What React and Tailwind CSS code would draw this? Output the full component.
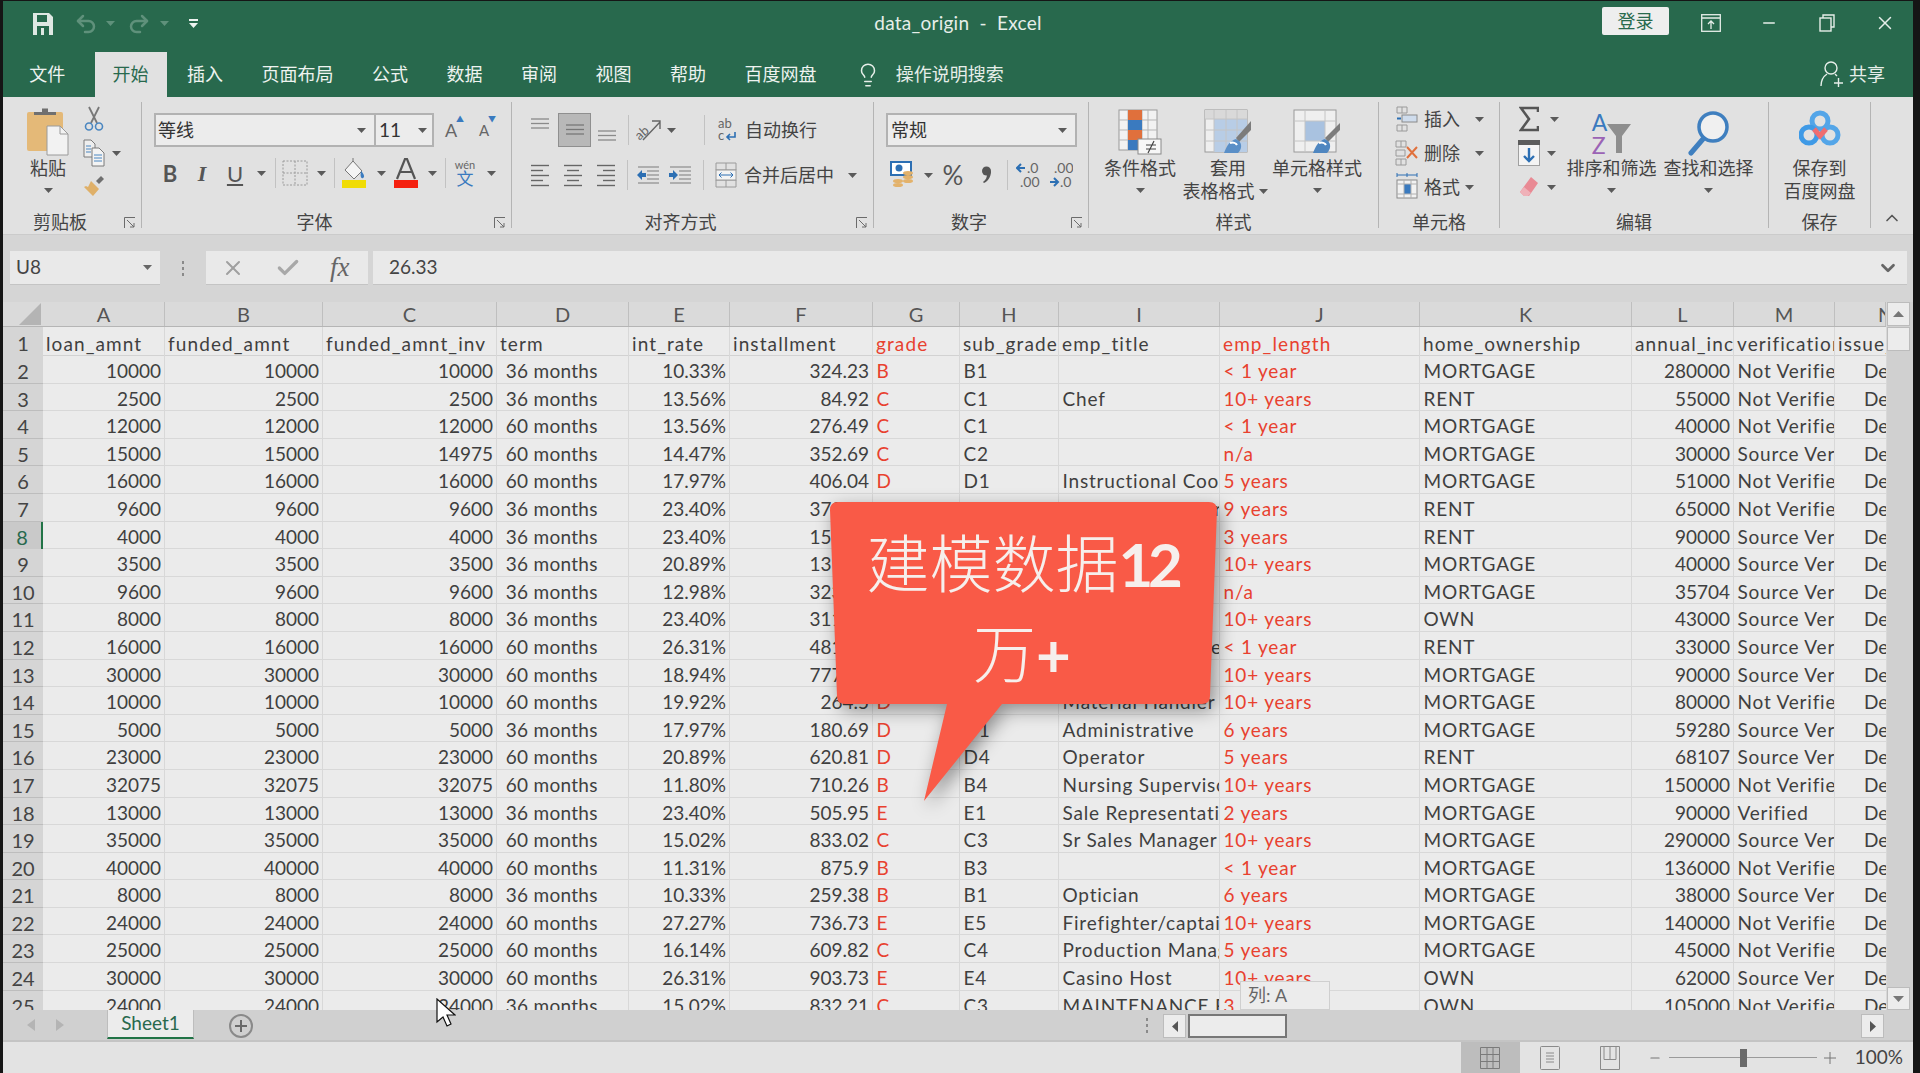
import React from "react";
import { X, Minus, Check, ChevronUp, ChevronDown, Undo2, Redo2, Lightbulb } from "lucide-react";

const COLS =
	"grid grid-cols-[40px_122px_158px_174px_132px_101px_143px_87px_99px_161px_200px_212px_102px_101px_51px]";

const HEAD = ["A", "B", "C", "D", "E", "F", "G", "H", "I", "J", "K", "L", "M", "N"];
const FIRST = ["loan_amnt", "funded_amnt", "funded_amnt_inv", "term", "int_rate", "installment", "grade", "sub_grade", "emp_title", "emp_length", "home_ownership", "annual_inc", "verification", "issue_d"];

const NV = "Not Verified";
const SV = "Source Verified";
const ROWS = [
	[10000, 10000, 10000, "36 months", "10.33%", "324.23", "B", "B1", "", "< 1 year", "MORTGAGE", 280000, NV],
	[2500, 2500, 2500, "36 months", "13.56%", "84.92", "C", "C1", "Chef", "10+ years", "RENT", 55000, NV],
	[12000, 12000, 12000, "60 months", "13.56%", "276.49", "C", "C1", "", "< 1 year", "MORTGAGE", 40000, NV],
	[15000, 15000, 14975, "60 months", "14.47%", "352.69", "C", "C2", "", "n/a", "MORTGAGE", 30000, SV],
	[16000, 16000, 16000, "60 months", "17.97%", "406.04", "D", "D1", "Instructional Coordinator", "5 years", "MORTGAGE", 51000, NV],
	[9600, 9600, 9600, "36 months", "23.40%", "373.94", "E", "E1", "Account Manager Senior Leader", "9 years", "RENT", 65000, NV],
	[4000, 4000, 4000, "36 months", "23.40%", "155.68", "E", "E1", "", "3 years", "RENT", 90000, SV],
	[3500, 3500, 3500, "36 months", "20.89%", "131.67", "D", "D4", "", "10+ years", "MORTGAGE", 40000, SV],
	[9600, 9600, 9600, "36 months", "12.98%", "323.37", "B", "B5", "", "n/a", "MORTGAGE", 35704, SV],
	[8000, 8000, 8000, "36 months", "23.40%", "311.35", "E", "E1", "", "10+ years", "OWN", 43000, SV],
	[16000, 16000, 16000, "60 months", "26.31%", "481.77", "E", "E4", "Customer Service Manager", "< 1 year", "RENT", 33000, SV],
	[30000, 30000, 30000, "60 months", "18.94%", "777.23", "D", "D2", "", "10+ years", "MORTGAGE", 90000, SV],
	[10000, 10000, 10000, "60 months", "19.92%", "264.5", "D", "D3", "Material Handler", "10+ years", "MORTGAGE", 80000, NV],
	[5000, 5000, 5000, "36 months", "17.97%", "180.69", "D", "D1", "Administrative", "6 years", "MORTGAGE", 59280, SV],
	[23000, 23000, 23000, "60 months", "20.89%", "620.81", "D", "D4", "Operator", "5 years", "RENT", 68107, SV],
	[32075, 32075, 32075, "60 months", "11.80%", "710.26", "B", "B4", "Nursing Supervisor", "10+ years", "MORTGAGE", 150000, NV],
	[13000, 13000, 13000, "36 months", "23.40%", "505.95", "E", "E1", "Sale Representative", "2 years", "MORTGAGE", 90000, "Verified"],
	[35000, 35000, 35000, "60 months", "15.02%", "833.02", "C", "C3", "Sr Sales Manager", "10+ years", "MORTGAGE", 290000, SV],
	[40000, 40000, 40000, "60 months", "11.31%", "875.9", "B", "B3", "", "< 1 year", "MORTGAGE", 136000, NV],
	[8000, 8000, 8000, "36 months", "10.33%", "259.38", "B", "B1", "Optician", "6 years", "MORTGAGE", 38000, SV],
	[24000, 24000, 24000, "60 months", "27.27%", "736.73", "E", "E5", "Firefighter/captain", "10+ years", "MORTGAGE", 140000, NV],
	[25000, 25000, 25000, "60 months", "16.14%", "609.82", "C", "C4", "Production Manager", "5 years", "MORTGAGE", 45000, NV],
	[30000, 30000, 30000, "60 months", "26.31%", "903.73", "E", "E4", "Casino Host", "10+ years", "OWN", 62000, SV],
	[24000, 24000, 24000, "36 months", "15.02%", "832.21", "C", "C3", "MAINTENANCE FOREMAN", "3 years", "OWN", 105000, NV],
];
const RIGHT = [0, 1, 2, 4, 5, 11];
const RED = [6, 9];
const WIDE = [6, 7, 8, 9, 10, 12];

const Caret = ({ c = "#5a5a5a" }) => (
	<svg width="9" height="5" viewBox="0 0 9 5">
		<path d="M0 0h9L4.5 5z" fill={c} />
	</svg>
);

const S = ({ w, children }) => <div className={"flex items-center justify-center shrink-0 " + w}>{children}</div>;
const Sep = ({ w, h = "h-[30px]" }) => (
	<div className={"flex items-center justify-center shrink-0 " + w}>
		<div className={"w-px bg-[#c2c2c2] " + h} />
	</div>
);

const Launcher = () => (
	<svg width="12" height="12" viewBox="0 0 12 12" fill="none" stroke="#6b6b6b">
		<path d="M.5 11V.5H11M3 3l7 7M10 6v4H6" />
	</svg>
);

const Group = ({ w, label, launcher, children }) => (
	<div className={"relative flex flex-col h-[126px] shrink-0 border-r border-[#b4b4b4] " + w}>
		<div className="flex-1 min-h-0">{children}</div>
		<div
			className={
				"h-[20px] leading-[28px] text-center text-[18px] text-[#444] whitespace-nowrap " +
				(launcher ? "pr-[24px]" : "")
			}
		>
			{label}
		</div>
		{launcher && (
			<div className="absolute right-[5px] bottom-[-1px]">
				<Launcher />
			</div>
		)}
	</div>
);

const Lines = ({ ws, x = "left" }) => (
	<svg width="22" height="24" viewBox="0 0 22 24" stroke="#666" strokeWidth="1.4">
		{ws.map((w, i) => {
			const x1 = x === "left" ? 2 : x === "right" ? 20 - w : 11 - w / 2;
			return <line key={i} x1={x1} x2={x1 + w} y1={2.5 + i * 5} y2={2.5 + i * 5} />;
		})}
	</svg>
);

const Vert = ({ y, c = "#8a8a8a" }) => (
	<svg width="22" height="34" viewBox="0 0 22 34" stroke={c} strokeWidth="1.3">
		{[0, 1, 2].map((i) => (
			<line key={i} x1="2" x2="20" y1={y + i * 4.5} y2={y + i * 4.5} />
		))}
	</svg>
);

const Indent = ({ flip }) => (
	<svg width="24" height="20" viewBox="0 0 24 20">
		<g stroke="#8c8c8c" strokeWidth="1.2">
			{[2, 6, 10, 14, 18].map((y) => (
				<line key={y} x1={y > 4 && y < 16 ? 11 : 2} x2="23" y1={y} y2={y} />
			))}
		</g>
		<path d={flip ? "M10 10L5 5v3H1v4h4v3z" : "M1 10l5-5v3h4v4H6v3z"} fill="#2c6fb3" />
	</svg>
);

const Paste = () => (
	<svg width="44" height="50" viewBox="0 0 44 50">
		<rect x="1" y="5" width="36" height="39" rx="2" fill="#e4b978" />
		<path d="M8 8V5h8V1.5h6V5h8v3z" fill="#6f6f6f" />
		<path d="M21 19h13l8 8v21H21z" fill="#f2f2f2" stroke="#9a9a9a" />
		<path d="M34 19v8h8" fill="none" stroke="#9a9a9a" />
	</svg>
);

const Scissors = () => (
	<svg width="20" height="26" viewBox="0 0 20 26" fill="none">
		<path d="M5 1l8 16M15 1L7 17" stroke="#777" strokeWidth="1.8" />
		<circle cx="5" cy="20.5" r="3.5" stroke="#4a86c0" strokeWidth="1.6" />
		<circle cx="15" cy="20.5" r="3.5" stroke="#4a86c0" strokeWidth="1.6" />
	</svg>
);

const CopyIcon = () => (
	<svg width="22" height="28" viewBox="0 0 22 28" fill="none">
		<path d="M1 1h7l4 4v13H1z" fill="#eee" stroke="#7a7a7a" />
		<path d="M9 9h7l5 5v13H9z" fill="#f3f3f3" stroke="#7a7a7a" />
		<path d="M11 16h8M11 19h8M11 22h8M3 7h5M3 10h5M3 13h5" stroke="#4a86c0" />
	</svg>
);

const Brush = () => (
	<svg width="22" height="22" viewBox="0 0 22 22">
		<path d="M13 6l5-5 3 3-5 5z" fill="#6f6f6f" />
		<path d="M8 6l8 8-6 7-9-9 2-1 2 1z" fill="#dfb069" />
	</svg>
);

const Borders = () => (
	<svg width="26" height="26" viewBox="0 0 26 26" fill="none" stroke="#9a9a9a" strokeDasharray="2 1.5">
		<rect x="1" y="1" width="24" height="24" />
		<path d="M13 1v24M1 13h24" />
	</svg>
);

const Bucket = () => (
	<svg width="26" height="30" viewBox="0 0 26 30">
		<path d="M11 3l9 10-8 8-9-9z" fill="#f4f4f4" stroke="#777" />
		<path d="M11 3V0" stroke="#777" />
		<path d="M19 13c3 3 4 6 2 7s-3-2-2-7z" fill="#3b7cc0" />
		<rect x="0" y="22" width="24" height="8" fill="#f0dc05" />
	</svg>
);

const FontColor = () => (
	<svg width="24" height="30" viewBox="0 0 24 30">
		<path d="M3 21L11 1h2l8 20M6 14h12" fill="none" stroke="#555" strokeWidth="2.2" />
		<rect x="0" y="22" width="24" height="8" fill="#f5200f" />
	</svg>
);

const WrapIcon = () => (
	<svg width="20" height="26" viewBox="0 0 20 26">
		<text x="1" y="11" fontSize="13" fill="#666" fontFamily="Lato">ab</text>
		<text x="1" y="23" fontSize="13" fill="#666" fontFamily="Lato">c</text>
		<path d="M18 15v5H11M13 17l-3 3 3 3" fill="none" stroke="#2c6fb3" strokeWidth="1.6" />
	</svg>
);

const Orient = () => (
	<svg width="26" height="24" viewBox="0 0 26 24" fill="none">
		<text x="1" y="20" fontSize="13" fill="#666" fontFamily="Lato" transform="rotate(-42 6 18)">ab</text>
		<path d="M7 22L24 4M16 3h8v8" stroke="#666" strokeWidth="1.4" />
	</svg>
);

const Merge = () => (
	<svg width="22" height="26" viewBox="0 0 22 26" fill="none">
		<path d="M1 1h20v7H1zM1 18h20v7H1zM11 1v7M11 18v7" stroke="#9a9a9a" />
		<rect x="1" y="8" width="20" height="10" fill="#f3f3f3" stroke="#9a9a9a" />
		<path d="M4 13h14M6.5 10.5L4 13l2.5 2.5M15.5 10.5L18 13l-2.5 2.5" stroke="#2c6fb3" />
	</svg>
);

const Currency = () => (
	<svg width="24" height="28" viewBox="0 0 24 28">
		<rect x="1" y="1" width="20" height="13" fill="#fff" stroke="#2c6fb3" strokeWidth="2" />
		<circle cx="9" cy="7" r="3.5" fill="#2c6fb3" />
		<g fill="#e3b26b">
			<ellipse cx="18" cy="12" rx="5" ry="2" />
			<ellipse cx="18" cy="16" rx="5" ry="2" />
			<ellipse cx="18" cy="20" rx="5" ry="2" />
			<ellipse cx="8" cy="20" rx="5" ry="2" />
			<ellipse cx="8" cy="24" rx="5" ry="2" />
		</g>
	</svg>
);

const Comma = () => (
	<svg width="10" height="18" viewBox="0 0 10 18">
		<circle cx="5.500" cy="5" r="4.500" fill="#555" />
		<path d="M10 5c0 6-3 10-7 12l-1-1c3-2 4-5 4-8z" fill="#555" />
	</svg>
);

const Dec = ({ more }) =>
	more ? (
		<svg width="24" height="28" viewBox="0 0 24 28" fontFamily="Lato" fontSize="14" fill="#666">
			<path d="M1 7h8M5 3L1 7l4 4" fill="none" stroke="#2c6fb3" strokeWidth="2" />
			<text x="11" y="12">.0</text>
			<text x="4" y="26">.00</text>
		</svg>
	) : (
		<svg width="24" height="28" viewBox="0 0 24 28" fontFamily="Lato" fontSize="14" fill="#666">
			<text x="5" y="12">.00</text>
			<path d="M1 21h8M5 17l4 4-4 4" fill="none" stroke="#2c6fb3" strokeWidth="2" />
			<text x="11" y="26">.0</text>
		</svg>
	);

const CondFormat = () => (
	<svg width="44" height="46" viewBox="0 0 44 46">
		<rect x="1" y="1" width="38" height="40" fill="#f2f2f2" stroke="#9a9a9a" />
		<path d="M10 1v40M24 1v40M30 1v40M1 11h38M1 21h38M1 31h38" stroke="#b5b5b5" />
		<rect x="10" y="1" width="14" height="10" fill="#e0703c" />
		<rect x="10" y="11" width="14" height="10" fill="#3a7abf" />
		<rect x="10" y="21" width="14" height="10" fill="#e0703c" />
		<rect x="10" y="31" width="14" height="10" fill="#3a7abf" />
		<rect x="20" y="30" width="23" height="15" fill="#f7f7f7" stroke="#8a8a8a" />
		<path d="M28 36h10M28 40h10M36 32l-6 12" stroke="#444" strokeWidth="1.2" fill="none" />
	</svg>
);

const TableStyle = () => (
	<svg width="48" height="46" viewBox="0 0 48 46">
		<rect x="1" y="1" width="42" height="42" fill="#efefef" stroke="#9a9a9a" />
		<rect x="1" y="1" width="42" height="9" fill="#d9d9d9" />
		<rect x="10" y="10" width="33" height="33" fill="#b8cde6" />
		<path d="M10 1v42M22 1v42M33 1v42M1 10h42M1 21h42M1 32h42" stroke="#c4c4c4" />
		<path d="M47 12l-15 17 3 4 12-12z" fill="#7c7c7c" />
		<path d="M32 30c-6 2-9 6-12 14h14c4-4 4-9 1-12z" fill="#5a8fc7" />
		<path d="M26 34c3-1 6 0 7 2" stroke="#fff" strokeWidth="2" fill="none" />
	</svg>
);

const CellStyle = () => (
	<svg width="48" height="46" viewBox="0 0 48 46">
		<rect x="1" y="1" width="42" height="42" fill="#efefef" stroke="#9a9a9a" />
		<rect x="12" y="12" width="20" height="20" fill="#a9c2e0" />
		<path d="M12 1v42M32 1v42M1 12h42M1 32h42" stroke="#c4c4c4" />
		<path d="M47 14l-15 15 3 4 12-12z" fill="#7c7c7c" />
		<path d="M32 30c-6 2-9 6-12 14h14c4-4 4-9 1-12z" fill="#4f86c0" />
		<path d="M26 34c3-1 6 0 7 2" stroke="#fff" strokeWidth="2" fill="none" />
	</svg>
);

const CellInsert = () => (
	<svg width="22" height="26" viewBox="0 0 22 26" fill="none" stroke="#9a9a9a">
		<path d="M1 1h10v6H1zM6 1v6M1 19h10v6H1zM6 19v6" />
		<rect x="6" y="9" width="15" height="7" fill="#cfdcec" stroke="#8a8a8a" />
		<path d="M1 12.5h4" stroke="#2c6fb3" strokeWidth="2" />
	</svg>
);

const CellDelete = () => (
	<svg width="24" height="26" viewBox="0 0 24 26" fill="none" stroke="#9a9a9a">
		<path d="M1 1h10v6H1zM6 1v6M1 19h10v6H1zM6 19v6M1 10h9v6H1z" />
		<path d="M12 7l10 11M22 7L12 18" stroke="#e0703c" strokeWidth="2" />
	</svg>
);

const CellFormat = () => (
	<svg width="24" height="28" viewBox="0 0 24 28" fill="none" stroke="#8a8a8a">
		<path d="M2 2h20M2 0v4M22 0v4M12 0v4" stroke="#2c6fb3" />
		<rect x="2" y="7" width="20" height="18" fill="#f2f2f2" />
		<rect x="9" y="11" width="7" height="10" fill="#3a7abf" stroke="none" />
		<path d="M2 11h20M2 21h20M9 7v18M16 7v18" stroke="#b0b0b0" />
	</svg>
);

const Sigma = () => (
	<svg width="20" height="26" viewBox="0 0 20 26" fill="none">
		<path d="M19 6V2H2l8 11-8 11h17v-4" stroke="#555" strokeWidth="2.6" />
	</svg>
);

const FillDown = () => (
	<svg width="22" height="26" viewBox="0 0 22 26">
		<rect x=".5" y=".5" width="21" height="25" fill="#f4f4f4" stroke="#a0a0a0" />
		<rect x="0" y="0" width="22" height="5" fill="#5c5c5c" />
		<path d="M11 8v13M6 16l5 5 5-5" fill="none" stroke="#2c6fb3" strokeWidth="2.4" />
	</svg>
);

const Eraser = () => (
	<svg width="20" height="22" viewBox="0 0 20 22">
		<path d="M12 1l7 6-9 13H5l-4-4z" fill="#e98a94" />
		<path d="M1 16l4-5 7 6-3 3H5z" fill="#efb1b8" />
	</svg>
);

const SortIcon = () => (
	<div className="flex items-start h-[46px] mt-[2px]">
		<div className="flex flex-col leading-[23px] text-[23px] font-['Lato',sans-serif]">
			<span className="text-[#3a7abf]">A</span>
			<span className="text-[#9b63b5]">Z</span>
		</div>
		<svg width="24" height="32" viewBox="0 0 24 32" className="mt-[12px]">
			<path d="M0 1h24L15 13v17H9V13z" fill="#8e8e8e" />
		</svg>
	</div>
);

const Magnifier = () => (
	<svg width="42" height="50" viewBox="0 0 42 50" fill="none">
		<circle cx="25" cy="18" r="14" fill="#f0f0f0" stroke="#3f7fbf" strokeWidth="3.5" />
		<path d="M15 30L3 44" stroke="#3f7fbf" strokeWidth="5" strokeLinecap="round" />
	</svg>
);

const BaiduCloud = () => (
	<svg width="42" height="40" viewBox="0 0 42 40" fill="none" strokeWidth="5">
		<circle cx="21" cy="12" r="8" stroke="#53a5e8" />
		<circle cx="10" cy="26" r="8" stroke="#3f9ae6" />
		<circle cx="31" cy="26" r="8" stroke="#53a5e8" />
		<path d="M15 20l6 7 6-7" stroke="#ef6d70" />
	</svg>
);

const SaveIcon = () => (
	<svg width="20" height="22" viewBox="0 0 20 22">
		<path d="M0 0h16l4 4v18H0z" fill="#dfe8e3" />
		<rect x="4" y="2" width="10" height="7" fill="#28694d" />
		<rect x="4" y="13" width="12" height="9" fill="#28694d" />
		<rect x="8" y="15" width="3" height="7" fill="#dfe8e3" />
	</svg>
);

const BigBtn = ({ w, icon, lines, caret }) => (
	<div className={"flex flex-col items-center shrink-0 " + w}>
		<div className="h-[48px] mt-[7px] flex items-start justify-center">{icon}</div>
		{lines.map((l, i) => (
			<div key={i} className="h-[23px] leading-[23px] text-[18px] text-[#444] whitespace-nowrap">
				{l}
			</div>
		))}
		{caret && (
			<div className="h-[21px] flex items-center">
				<Caret />
			</div>
		)}
	</div>
);

const SmallBtn = ({ icon, text, caretW }) => (
	<div className="flex items-center h-[34px] ml-[11px]">
		<S w="w-[34px]">{icon}</S>
		<span className="text-[18px] text-[#444] w-[36px] whitespace-nowrap">{text}</span>
		<S w={caretW}>
			<Caret />
		</S>
	</div>
);

const Tab = ({ children, active, cls = "" }) => (
	<div
		className={
			"h-[45px] px-[18px] mx-[1.25px] leading-[44px] text-[18px] whitespace-nowrap " +
			(active ? "bg-[#e1e1e1] text-[#28694d] " : "text-[#eef3f0] ") +
			cls
		}
	>
		{children}
	</div>
);

const Ribbon = () => (
	<div className="flex items-start h-[138px] pt-[5px] bg-[#e1e1e1] border-b border-[#cbcbcb]">
		<Group w="w-[139px]" label="剪贴板" launcher>
			<div className="flex">
				<div className="flex flex-col items-center w-[44px] ml-[23px]">
					<div className="mt-[5px] h-[50px]">
						<Paste />
					</div>
					<div className="h-[23px] leading-[23px] text-[18px] text-[#444]">粘贴</div>
					<div className="h-[21px] flex items-center">
						<Caret />
					</div>
				</div>
				<div className="flex flex-col ml-[12px]">
					<S w="w-[24px] h-[34px]">
						<Scissors />
					</S>
					<div className="flex items-center h-[34px]">
						<S w="w-[24px]">
							<CopyIcon />
						</S>
						<S w="w-[20px]">
							<Caret />
						</S>
					</div>
					<S w="w-[24px] h-[32px]">
						<Brush />
					</S>
				</div>
			</div>
		</Group>

		<Group w="w-[370px]" label="字体" launcher>
			<div className="flex items-center mt-[11px] h-[34px] ml-[12px]">
				<div className="flex items-center justify-between w-[222px] h-[34px] pl-[2px] pr-[8px] bg-[#ececec] border-2 border-[#b2b2b2] text-[18px] text-[#333]">
					等线
					<Caret />
				</div>
				<div className="flex items-center justify-between w-[58px] h-[34px] pl-[3px] pr-[5px] bg-[#ececec] border-2 border-l-0 border-[#b2b2b2] text-[19px] text-[#333]">
					11
					<Caret />
				</div>
				<S w="w-[34px]">
					<span className="relative text-[18px] text-[#666]">
						A<span className="absolute left-[11px] top-[-4px] text-[8px] text-[#3a7abf]">▲</span>
					</span>
				</S>
				<S w="w-[32px]">
					<span className="relative text-[15px] text-[#666]">
						A<span className="absolute left-[9px] top-[-6px] text-[8px] text-[#3a7abf]">▼</span>
					</span>
				</S>
			</div>
			<div className="flex items-center mt-[11px] h-[30px] ml-[12px]">
				<S w="w-[32px]">
					<span className="font-bold text-[22px] text-[#555]">B</span>
				</S>
				<S w="w-[32px]">
					<span className="italic font-bold text-[22px] text-[#555] font-['Liberation_Serif',serif]">I</span>
				</S>
				<S w="w-[34px]">
					<span className="underline text-[22px] text-[#555]">U</span>
				</S>
				<S w="w-[18px]">
					<Caret />
				</S>
				<Sep w="w-[10px]" />
				<S w="w-[30px]">
					<Borders />
				</S>
				<S w="w-[22px]">
					<Caret />
				</S>
				<Sep w="w-[4px]" />
				<S w="w-[38px]">
					<Bucket />
				</S>
				<S w="w-[14px]">
					<Caret />
				</S>
				<S w="w-[36px]">
					<FontColor />
				</S>
				<S w="w-[16px]">
					<Caret />
				</S>
				<Sep w="w-[10px]" />
				<S w="w-[30px]">
					<div className="flex flex-col items-center leading-none">
						<span className="text-[11px] text-[#666]">wén</span>
						<span className="text-[17px] text-[#3a7abf]">文</span>
					</div>
				</S>
				<S w="w-[22px]">
					<Caret />
				</S>
			</div>
		</Group>

		<Group w="w-[362px]" label="对齐方式" launcher>
			<div className="flex items-center mt-[11px] h-[34px] ml-[10px]">
				<S w="w-[36px]">
					<Vert y={6} />
				</S>
				<div className="flex items-center justify-center w-[33px] h-[34px] shrink-0 bg-[#b8b8b8] border border-[#8f8f8f]">
					<Vert y={12} c="#777" />
				</div>
				<S w="w-[32px]">
					<Vert y={18} />
				</S>
				<Sep w="w-[10px]" />
				<S w="w-[32px]">
					<Orient />
				</S>
				<S w="w-[12px]">
					<Caret />
				</S>
				<div className="w-[22px] shrink-0" />
				<Sep w="w-[10px]" />
				<S w="w-[36px]">
					<WrapIcon />
				</S>
				<span className="text-[18px] text-[#444] whitespace-nowrap">自动换行</span>
			</div>
			<div className="flex items-center mt-[13px] h-[30px] ml-[10px]">
				<S w="w-[36px]">
					<Lines ws={[18, 12, 18, 12, 18]} />
				</S>
				<S w="w-[30px]">
					<Lines ws={[18, 12, 18, 12, 18]} x="center" />
				</S>
				<S w="w-[36px]">
					<Lines ws={[18, 12, 18, 12, 18]} x="right" />
				</S>
				<Sep w="w-[6px]" />
				<S w="w-[36px]">
					<Indent />
				</S>
				<S w="w-[28px]">
					<Indent flip />
				</S>
				<Sep w="w-[18px]" />
				<S w="w-[28px]">
					<Merge />
				</S>
				<span className="ml-[4px] w-[90px] text-[18px] text-[#444] whitespace-nowrap">合并后居中</span>
				<S w="w-[36px]">
					<Caret />
				</S>
			</div>
		</Group>

		<Group w="w-[215px]" label="数字" launcher>
			<div className="flex items-center justify-between mt-[11px] ml-[12px] w-[191px] h-[34px] pl-[3px] pr-[8px] bg-[#ececec] border-2 border-[#b2b2b2] text-[18px] text-[#333]">
				常规
				<Caret />
			</div>
			<div className="flex items-center mt-[13px] h-[30px] ml-[12px]">
				<S w="w-[32px]">
					<Currency />
				</S>
				<S w="w-[20px]">
					<Caret />
				</S>
				<S w="w-[30px]">
					<span className="text-[26px] text-[#555]">%</span>
				</S>
				<S w="w-[36px]">
					<Comma />
				</S>
				<Sep w="w-[6px]" />
				<S w="w-[36px]">
					<Dec more />
				</S>
				<S w="w-[30px]">
					<Dec />
				</S>
			</div>
		</Group>

		<Group w="w-[290px]" label="样式">
			<div className="flex ml-[11px]">
				<BigBtn w="w-[80px]" icon={<CondFormat />} lines={["条件格式"]} caret />
				<div className="flex flex-col items-center w-[88px] ml-[4px] shrink-0">
					<div className="h-[48px] mt-[7px]">
						<TableStyle />
					</div>
					<div className="h-[23px] leading-[23px] text-[18px] text-[#444]">套用</div>
					<div className="flex items-center gap-[4px] h-[23px] mr-[6px] text-[18px] text-[#444] whitespace-nowrap">
						表格格式
						<Caret />
					</div>
				</div>
				<BigBtn w="w-[90px]" icon={<CellStyle />} lines={["单元格样式"]} caret />
			</div>
		</Group>

		<Group w="w-[121px]" label="单元格">
			<SmallBtn icon={<CellInsert />} text="插入" caretW="w-[38px]" />
			<SmallBtn icon={<CellDelete />} text="删除" caretW="w-[38px]" />
			<SmallBtn icon={<CellFormat />} text="格式" caretW="w-[18px]" />
		</Group>

		<Group w="w-[269px]" label="编辑">
			<div className="flex">
				<div className="flex flex-col w-[65px] shrink-0 pl-[12px]">
					<div className="flex items-center h-[34px]">
						<S w="w-[34px]">
							<Sigma />
						</S>
						<S w="w-[16px]">
							<Caret />
						</S>
					</div>
					<div className="flex items-center h-[34px]">
						<S w="w-[34px]">
							<FillDown />
						</S>
						<S w="w-[10px]">
							<Caret />
						</S>
					</div>
					<div className="flex items-center h-[34px]">
						<S w="w-[34px]">
							<Eraser />
						</S>
						<S w="w-[10px]">
							<Caret />
						</S>
					</div>
				</div>
				<BigBtn w="w-[93px]" icon={<SortIcon />} lines={["排序和筛选"]} caret />
				<BigBtn w="w-[101px]" icon={<Magnifier />} lines={["查找和选择"]} caret />
			</div>
		</Group>

		<Group w="w-[102px]" label="保存">
			<BigBtn w="w-full" icon={<BaiduCloud />} lines={["保存到", "百度网盘"]} />
		</Group>

		<div className="flex-1 flex justify-center items-end h-[126px]">
			<ChevronUp size={20} className="text-[#555]" />
		</div>
	</div>
);

const FormulaBar = () => (
	<div className="flex h-[67px] pt-[16px] pb-[17px] pl-[7px] pr-[6px] bg-[#d5d5d5]">
		<div className="flex items-center justify-between w-[150px] pl-[6px] pr-[8px] bg-[#e9e9e9] border-b border-[#c4c4c4] text-[19px] text-[#444]">
			U8
			<Caret c="#666" />
		</div>
		<div className="flex flex-col items-center justify-center gap-[3px] w-[46px]">
			<div className="w-[2px] h-[3px] bg-[#8a8a8a]" />
			<div className="w-[2px] h-[3px] bg-[#8a8a8a]" />
			<div className="w-[2px] h-[3px] bg-[#8a8a8a]" />
		</div>
		<div className="flex items-center w-[162px] pl-[15px] bg-[#e9e9e9] border-b border-[#c4c4c4]">
			<X size={24} className="text-[#a0a0a0]" />
			<Check size={26} strokeWidth={3} className="text-[#a8a8a8] ml-[30px]" />
			<span className="ml-[29px] italic text-[27px] text-[#666] font-['Liberation_Serif',serif]">fx</span>
		</div>
		<div className="flex items-center justify-between flex-1 ml-[5px] pl-[16px] pr-[8px] bg-[#e9e9e9] border-b border-[#c4c4c4] text-[19px] text-[#444]">
			26.33
			<ChevronDown size={22} strokeWidth={3} className="text-[#666]" />
		</div>
	</div>
);

const Sheet = () => (
	<div className="flex h-[708px] bg-[#d8d8d8]">
		<div className="w-[1883px] h-[708px] overflow-hidden shrink-0">
			<div className={COLS + " h-[25px] bg-[#dadada] border-b border-[#b5b5b5]"}>
				<div className="flex items-end justify-end pr-[2px] pb-[1px]">
					<svg width="22" height="22" viewBox="0 0 22 22">
						<path d="M22 0v22H0z" fill="#b4b4b4" />
					</svg>
				</div>
				{HEAD.map((h) => (
					<div
						key={h}
						className={
							"leading-[24px] text-[20px] text-[#555] border-r border-[#bfbfbf] overflow-hidden " +
							(h === "N" ? "pl-[43px]" : "text-center")
						}
					>
						{h}
					</div>
				))}
			</div>
			<div className={COLS + " h-[29px] border-b border-[#d2d2d2] bg-[#ebebeb]"}>
				<div className="bg-[#d5d5d5] text-center leading-[33px] text-[20px] text-[#444] border-b border-[#bdbdbd]">1</div>
				{FIRST.map((f, i) => (
					<div
						key={f}
						className={
							"pl-[3px] leading-[33px] text-[19px] tracking-[1.1px] whitespace-nowrap overflow-hidden " +
							(RED.includes(i) ? "text-[#e8412f] " : "text-[#3f3f3f] ") +
							(i === 13 ? "" : "border-r border-[#d8d8d8]")
						}
					>
						{f === "issue_d" ? "issue_" : f}
					</div>
				))}
			</div>
			{ROWS.map((r, n) => (
				<div key={n} className={COLS + " h-[27.6px] bg-[#ebebeb]"}>
					<div
						className={
							"text-center leading-[30px] text-[20px] overflow-hidden " +
							(n === 6
								? "bg-[#c9c9c9] text-[#28694d] border-r-2 border-r-[#217346]"
								: "bg-[#d5d5d5] text-[#444] border-b border-[#bdbdbd]")
						}
					>
						{n + 2}
					</div>
					{r.map((v, i) => (
						<div
							key={i}
							className={
								"leading-[30px] text-[19px] whitespace-pre overflow-hidden border-r border-b border-[#d8d8d8] " +
								(RIGHT.includes(i) ? "text-right pr-[3px] " : "pl-[3.5px] ") +
								(RED.includes(i) ? "text-[#e8412f] " : "text-[#3f3f3f] ") +
								(WIDE.includes(i) ? "tracking-[0.8px] " : "") +
								(i === 3 ? "tracking-[0.3px]" : "")
							}
						>
							{i === 3 ? " " + v : v}
						</div>
					))}
					<div className="pl-[29px] leading-[30px] text-[19px] text-[#3f3f3f] border-b border-[#d8d8d8] overflow-hidden whitespace-nowrap">
						Dec-15
					</div>
				</div>
			))}
		</div>
		<div className="flex flex-col flex-1 ml-[1px] bg-[#d0d0d0]">
			<div className="flex items-center justify-center w-[23px] h-[24px] bg-[#ececec] border border-[#bcbcbc]">
				<svg width="11" height="6" viewBox="0 0 11 6">
					<path d="M0 6h11L5.500 0z" fill="#777" />
				</svg>
			</div>
			<div className="w-[23px] h-[24px] mt-[1px] bg-[#ececec] border border-[#bcbcbc]" />
			<div className="flex-1" />
			<div className="flex items-center justify-center w-[23px] h-[23px] bg-[#ececec] border border-[#bcbcbc]">
				<svg width="11" height="6" viewBox="0 0 11 6">
					<path d="M0 0h11L5.500 6z" fill="#777" />
				</svg>
			</div>
		</div>
	</div>
);

const SheetBar = () => (
	<div className="flex items-start h-[32px] bg-[#d0d0d0] border-b-2 border-[#c4c4c4]">
		<S w="w-[56px] h-[30px]">
			<svg width="8" height="12" viewBox="0 0 8 12">
				<path d="M8 0v12L0 6z" fill="#b4b4b4" />
			</svg>
		</S>
		<S w="w-[2px] h-[30px]">
			<svg width="8" height="12" viewBox="0 0 8 12" className="shrink-0">
				<path d="M0 0v12L8 6z" fill="#b4b4b4" />
			</svg>
		</S>
		<div className="ml-[46px] w-[87px] h-[29px] leading-[26px] text-center text-[19px] text-[#28694d] bg-[#ececec] border-b-2 border-[#217346] border-x border-x-[#bdbdbd]">
			Sheet1
		</div>
		<div className="flex items-center justify-center w-[24px] h-[24px] ml-[35px] mt-[4px] rounded-full border-2 border-[#8a8a8a] text-[#666]">
			<svg width="12" height="12" viewBox="0 0 12 12">
				<path d="M6 0v12M0 6h12" stroke="#6a6a6a" strokeWidth="2" />
			</svg>
		</div>
		<div className="flex flex-col justify-center gap-[3px] h-[30px] ml-[893px]">
			<div className="w-[2px] h-[3px] bg-[#8a8a8a]" />
			<div className="w-[2px] h-[3px] bg-[#8a8a8a]" />
			<div className="w-[2px] h-[3px] bg-[#8a8a8a]" />
		</div>
		<div className="flex items-center justify-center w-[23px] h-[24px] ml-[15px] mt-[4px] bg-[#ececec] border border-[#bcbcbc]">
			<svg width="6" height="11" viewBox="0 0 6 11">
				<path d="M6 0v11L0 5.500z" fill="#555" />
			</svg>
		</div>
		<div className="w-[99px] h-[24px] ml-[2px] mt-[4px] bg-[#ececec] border-2 border-[#777]" />
		<div className="w-[574px] shrink-0" />
		<div className="flex items-center justify-center w-[23px] h-[24px] mt-[4px] bg-[#ececec] border border-[#bcbcbc]">
			<svg width="6" height="11" viewBox="0 0 6 11">
				<path d="M0 0v11L6 5.500z" fill="#555" />
			</svg>
		</div>
	</div>
);

const StatusBar = () => (
	<div className="flex items-center justify-end h-[31px] bg-[#e3e3e3] text-[#555]">
		<div className="flex items-center justify-center w-[59px] h-[31px] bg-[#bdbdbd]">
			<svg width="20" height="22" viewBox="0 0 20 22" fill="none" stroke="#7a7a7a">
				<path d="M.5.500h19v21H.5zM7 0v22M13 0v22M0 7.500h20M0 14.500h20" />
			</svg>
		</div>
		<S w="w-[60px]">
			<svg width="20" height="24" viewBox="0 0 20 24" fill="none" stroke="#8a8a8a">
				<rect x=".5" y=".5" width="19" height="23" rx="1" />
				<path d="M6 7h8M6 10h8M6 13h8M6 16h8" />
			</svg>
		</S>
		<S w="w-[60px]">
			<svg width="20" height="24" viewBox="0 0 20 24" fill="none" stroke="#8a8a8a">
				<path d="M.5.500h19v23H.5zM4 .5v13h12V.5M10 .5v13" />
			</svg>
		</S>
		<Minus size={14} className="ml-[8px] text-[#777]" />
		<div className="relative flex items-center w-[148px] h-[20px] ml-[7px]">
			<div className="w-full h-px bg-[#9a9a9a]" />
			<div className="absolute left-[71px] w-[7px] h-[18px] bg-[#6a6a6a]" />
		</div>
		<svg width="12" height="12" viewBox="0 0 12 12" className="ml-[7px]">
			<path d="M6 0v12M0 6h12" stroke="#777" />
		</svg>
		<span className="ml-[19px] mr-[10px] text-[19px] text-[#444]">100%</span>
	</div>
);

const Callout = () => (
	<div className="absolute left-[826px] top-[498px] w-[392px] h-[310px]">
		<svg
			width="400"
			height="310"
			viewBox="0 0 400 310"
			className="absolute left-0 top-0 drop-shadow-[4px_6px_9px_rgba(0,0,0,0.4)]"
		>
			<path
				d="M12 4H383Q391 4 391 12L384 198Q384 206 376 206H176L98 303L121 206H19Q11 206 11 198L4 12Q4 4 12 4Z"
				fill="#f95a47"
			/>
		</svg>
		<div className="relative pt-[19px] text-center text-[63px] leading-[85px] font-extralight text-[#f6efec] font-['Noto_Sans_CJK_SC',sans-serif]">
			<div>
				建模数据
				<span className="font-bold text-[60px] tracking-[-0.09em] font-['Lato',sans-serif]">12</span>
			</div>
			<div>
				万<span className="font-bold text-[60px] font-['Lato',sans-serif]">+</span>
			</div>
		</div>
	</div>
);

export default function App() {
	return (
		<div className="relative w-[1920px] h-[1073px] overflow-hidden bg-[#151515] pl-[3px] pr-[7px] pt-px font-['Lato','Noto_Sans_CJK_SC',sans-serif]">
			<div className="bg-[#28694d] h-[96px]">
				<div className="flex items-start h-[51px]">
					<div className="flex items-center shrink-0 w-[865px] h-[45px] pl-[26px]">
						<S w="w-[28px]">
							<SaveIcon />
						</S>
						<S w="w-[28px] ml-[15px]">
							<Undo2 size={24} strokeWidth={2.5} className="text-[#5f917b]" />
						</S>
						<S w="w-[20px]">
							<Caret c="#5f917b" />
						</S>
						<S w="w-[28px] ml-[5px]">
							<Redo2 size={24} strokeWidth={2.5} className="text-[#5f917b]" />
						</S>
						<S w="w-[22px]">
							<Caret c="#5f917b" />
						</S>
						<S w="w-[20px] ml-[8px]">
							<div className="flex flex-col items-center gap-[2px]">
								<div className="w-[9px] h-[2px] bg-[#eef3f0]" />
								<Caret c="#eef3f0" />
							</div>
						</S>
					</div>
					<div className="w-[180px] shrink-0 text-center h-[45px] leading-[44px] text-[19px] tracking-[0.25px] text-[#e6eee9] whitespace-pre">
						data_origin  -  Excel
					</div>
					<div className="flex-1 flex justify-end items-start">
						<div className="w-[67px] h-[28px] mt-[6px] mr-[13px] rounded-[2px] bg-[#eeeeee] text-center leading-[28px] text-[18px] text-[#28694d]">
							登录
						</div>
						<S w="w-[58px] h-[43px]">
							<svg width="20" height="18" viewBox="0 0 20 18" fill="none" stroke="#e6eee9" strokeWidth="1.3">
								<rect x=".7" y=".7" width="18.600" height="16.600" />
								<path d="M1 4h18M10 15V7M7 10l3-3 3 3" />
							</svg>
						</S>
						<S w="w-[58px] h-[43px]">
							<Minus size={18} className="text-[#e6eee9]" />
						</S>
						<S w="w-[58px] h-[43px]">
							<svg width="16" height="18" viewBox="0 0 16 18" fill="none" stroke="#e6eee9" strokeWidth="1.4">
								<rect x="1" y="4" width="11" height="13" />
								<path d="M4 4V1h11v12h-3" />
							</svg>
						</S>
						<S w="w-[57px] h-[43px]">
							<X size={22} strokeWidth={1.6} className="text-[#e6eee9]" />
						</S>
					</div>
				</div>
				<div className="flex items-start h-[45px] pl-[7px]">
					<Tab cls="mr-[10px]">文件</Tab>
					<Tab active>开始</Tab>
					<Tab>插入</Tab>
					<Tab>页面布局</Tab>
					<Tab>公式</Tab>
					<Tab>数据</Tab>
					<Tab>审阅</Tab>
					<Tab>视图</Tab>
					<Tab>帮助</Tab>
					<Tab>百度网盘</Tab>
					<S w="w-[30px] h-[45px] ml-[17px]">
						<Lightbulb size={26} strokeWidth={1.4} className="text-[#e6eee9]" />
					</S>
					<div className="ml-[13px] leading-[44px] text-[18px] text-[#e6eee9] whitespace-nowrap">操作说明搜索</div>
					<div className="flex-1 flex justify-end items-center h-[44px] pr-[28px] text-[18px] text-[#e6eee9]">
						<svg width="24" height="28" viewBox="0 0 24 28" fill="none" stroke="#e6eee9" strokeWidth="1.4" className="mr-[5px]">
							<circle cx="11" cy="8" r="6" />
							<path d="M1 26c0-6 3-10 6-12M15 14l2 2M14 23h9M18.500 18v9" />
						</svg>
						共享
					</div>
				</div>
			</div>

			<Ribbon />
			<FormulaBar />
			<Sheet />
			<SheetBar />
			<StatusBar />

			<Callout />

			<div className="absolute left-[1240px] top-[981px] w-[90px] h-[29px] pl-[7px] leading-[27px] text-[18px] text-[#666] bg-[#ececec] border border-[#cfcfcf]">
				列: A
			</div>
			<svg width="20" height="30" viewBox="0 0 20 30" className="absolute left-[436px] top-[998px]">
				<path d="M1 1v23l6-5 4 9 4-2-4-9h8z" fill="#fff" stroke="#111" strokeWidth="1.2" />
			</svg>
		</div>
	);
}
